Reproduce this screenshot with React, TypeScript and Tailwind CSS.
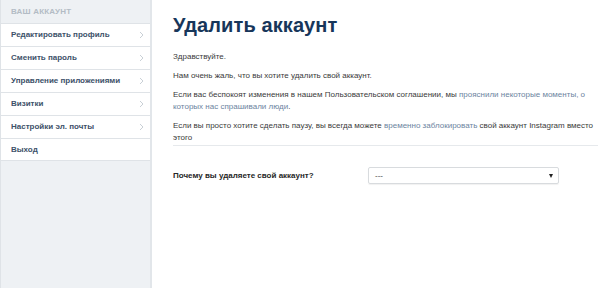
import React from 'react';

const menuItems = [
  { label: 'Редактировать профиль', arrow: true },
  { label: 'Сменить пароль', arrow: true },
  { label: 'Управление приложениями', arrow: true },
  { label: 'Визитки', arrow: true },
  { label: 'Настройки эл. почты', arrow: true },
  { label: 'Выход', arrow: false },
];

const Chevron: React.FC = () => (
  <svg width="5" height="8" viewBox="0 0 5 8" className="text-[#c9d0d6]">
    <polyline points="1,1 4,4 1,7" fill="none" stroke="currentColor" strokeWidth="1" />
  </svg>
);

const App: React.FC = () => {
  return (
    <div className="flex h-[288px] w-[600px] bg-white font-['Liberation_Sans',Arial,sans-serif] overflow-hidden">
      <aside className="w-[152px] shrink-0 bg-[#eef1f4] border-l border-[#dfe3e7] border-r-2 border-r-[#e2e6ea]">
        <div className="h-[23px] flex items-center pl-[10px] text-[8px] font-bold uppercase text-[#b3bcc5] tracking-[0.2px]">
          Ваш аккаунт
        </div>
        {menuItems.map(item => (
          <div
            key={item.label}
            className="h-[23px] flex items-center justify-between bg-white border-t border-[#dfe3e7] pl-[10px] pr-[6px] last:border-b"
          >
            <span className="text-[8px] font-bold text-[#3d5169]">{item.label}</span>
            {item.arrow && <Chevron />}
          </div>
        ))}
      </aside>

      <main className="flex-1 pl-[21px] pr-[2px] pt-[11px]">
        <h1 className="text-[20px] leading-[28px] font-bold text-[#17365a] tracking-[0.1px]">Удалить аккаунт</h1>

        <div className="mt-[12px] text-[8px] leading-[12px] text-[#3a3a3a] space-y-[7px]">
          <p>Здравствуйте.</p>
          <p>Нам очень жаль, что вы хотите удалить свой аккаунт.</p>
          <p>
            Если вас беспокоят изменения в нашем Пользовательском соглашении, мы{' '}
            <span className="text-[#6c84a0]">прояснили некоторые моменты, о которых нас спрашивали люди</span>.
          </p>
          <p>
            Если вы просто хотите сделать паузу, вы всегда можете{' '}
            <span className="text-[#6c84a0]">временно заблокировать</span> свой аккаунт Instagram вместо этого
          </p>
        </div>

        <div className="mt-[1px] border-t border-[#e6e9ec]" />

        <div className="mt-[21px] flex items-center">
          <label className="w-[195px] text-[8px] font-bold text-[#262626]">Почему вы удаляете свой аккаунт?</label>
          <div className="w-[191px] h-[17px] flex items-center justify-between border border-[#d8dbde] rounded-[2px] shadow-[0_1px_1px_rgba(0,0,0,0.06)] pl-[6px] pr-[5px]">
            <span className="text-[8px] text-[#444]">---</span>
            <svg width="4" height="4" viewBox="0 0 4 4">
              <polygon points="0,0 4,0 2,4" fill="#222" />
            </svg>
          </div>
        </div>
      </main>
    </div>
  );
};

export default App;
